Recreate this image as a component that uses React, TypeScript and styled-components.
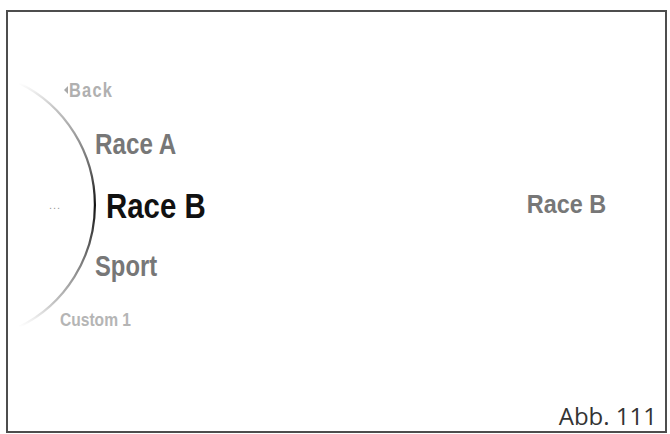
import React from "react";
import styled, { createGlobalStyle } from "styled-components";

type ItemProps = {
  $size: number;
  $color: string;
  $indent: number;
  $spacing?: number;
};

const GlobalStyle = createGlobalStyle`
  html, body {
    margin: 0;
    padding: 0;
    background: #fff;
  }
`;

const Frame = styled.div`
  position: relative;
  box-sizing: border-box;
  width: 661px;
  height: 423px;
  margin: 10px 0 0 6px;
  border: 2px solid #4d4d4d;
  display: flex;
  flex-direction: column;
  font-family: "Liberation Sans", Arial, sans-serif;
`;

const Screen = styled.div`
  flex: 1;
  display: flex;
  justify-content: space-between;
`;

const Menu = styled.div`
  display: flex;
  flex-direction: column;
  gap: 29px;
  padding-top: 68px;
`;

const Item = styled.div<ItemProps>`
  display: flex;
  align-items: center;
  padding-left: ${(p) => p.$indent}px;
  font-size: ${(p) => p.$size}px;
  line-height: 1;
  font-weight: 700;
  letter-spacing: ${(p) => p.$spacing ?? 0}px;
  color: ${(p) => p.$color};
  white-space: nowrap;
`;

// narrow bold face: squeeze the regular bold horizontally
const Label = styled.span<{ $origin?: string; $squeeze?: number }>`
  display: inline-block;
  transform: scaleX(${(p) => p.$squeeze ?? 0.82});
  transform-origin: ${(p) => p.$origin ?? "left"} center;
`;

const BackArrow = styled.span`
  width: 0;
  height: 0;
  margin-right: 1px;
  border-top: 4px solid transparent;
  border-bottom: 4px solid transparent;
  border-right: 4px solid #a8a8a8;
`;

const Dots = styled.span`
  width: 13px;
  margin-right: 44px;
  font-size: 11px;
  letter-spacing: 1px;
  color: #999;
  font-weight: 400;
`;

const Value = styled.div`
  padding: 179px 59px 0 0;
  font-size: 26px;
  line-height: 1;
  font-weight: 700;
  color: #777;
`;

const Caption = styled.div`
  align-self: flex-end;
  padding: 0 8px 3px 0;
  font-family: "Open Sans", "Liberation Sans", sans-serif;
  font-size: 24px;
  line-height: 1;
  color: #333;
`;

const Dial = styled.svg`
  position: absolute;
  left: 0;
  top: 0;
  width: 110px;
  height: 330px;
  overflow: visible;
  pointer-events: none;
`;

const DialArc = () => (
  <Dial viewBox="0 0 110 330">
    <defs>
      <linearGradient id="dialFade" gradientUnits="userSpaceOnUse" x1="0" y1="71" x2="0" y2="315">
        <stop offset="0" stopColor="#c8c8c8" stopOpacity="0" />
        <stop offset="0.1" stopColor="#c0c0c0" stopOpacity="0.9" />
        <stop offset="0.35" stopColor="#666" />
        <stop offset="0.5" stopColor="#111" />
        <stop offset="0.65" stopColor="#555" />
        <stop offset="0.9" stopColor="#bbb" stopOpacity="0.9" />
        <stop offset="1" stopColor="#c8c8c8" stopOpacity="0" />
      </linearGradient>
    </defs>
    <path d="M 11 71 A 136 136 0 0 1 11 315" fill="none" stroke="url(#dialFade)" strokeWidth="2.2" />
  </Dial>
);

export default function App() {
  return (
    <>
      <GlobalStyle />
      <Frame>
        <DialArc />
        <Screen>
          <Menu>
            <Item $size={20} $color="#b0b0b0" $indent={56} $spacing={1.5}>
              <BackArrow />
              <Label>Back</Label>
            </Item>
            <Item $size={29.5} $color="#777" $indent={87}>
              <Label>Race A</Label>
            </Item>
            <Item $size={35} $color="#111" $indent={41}>
              <Dots>...</Dots>
              <Label $squeeze={0.84}>Race B</Label>
            </Item>
            <Item $size={29} $color="#777" $indent={87}>
              <Label>Sport</Label>
            </Item>
            <Item $size={19} $color="#b5b5b5" $indent={52}>
              <Label>Custom 1</Label>
            </Item>
          </Menu>
          <Value>
            <Label $origin="right" $squeeze={0.9}>
              Race B
            </Label>
          </Value>
        </Screen>
        <Caption>Abb. 111</Caption>
      </Frame>
    </>
  );
}
